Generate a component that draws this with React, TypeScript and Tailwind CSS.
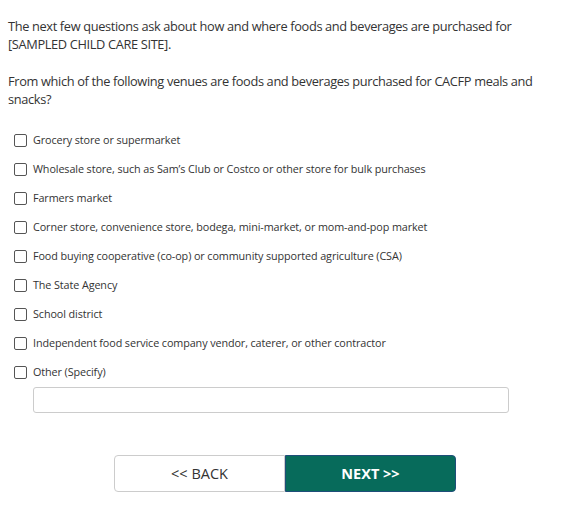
const options = [
  'Grocery store or supermarket',
  'Wholesale store, such as Sam’s Club or Costco or other store for bulk purchases',
  'Farmers market',
  'Corner store, convenience store, bodega, mini-market, or mom-and-pop market',
  'Food buying cooperative (co-op) or community supported agriculture (CSA)',
  'The State Agency',
  'School district',
  'Independent food service company vendor, caterer, or other contractor',
  'Other (Specify)',
];

export default function App() {
  return (
    <div
      className="w-[571px] h-[510px] bg-white text-[#333] pl-2 pt-[17px]"
      style={{ fontFamily: '"Open Sans", "Noto Sans", sans-serif' }}
    >
      <p className="text-[12.8px] leading-[18px] tracking-[-0.35px]">
        The next few questions ask about how and where foods and beverages are purchased for
        <br />
        [SAMPLED CHILD CARE SITE].
      </p>
      <p className="mt-[19px] text-[12.8px] leading-[18px] tracking-[-0.35px]">
        From which of the following venues are foods and beverages purchased for CACFP meals and
        <br />
        snacks?
      </p>

      <div className="mt-[25px] flex flex-col gap-[14px] pl-[6px]">
        {options.map((label) => (
          <label key={label} className="flex items-center h-[15px] gap-[6px] text-[10.8px] tracking-[-0.1px]">
            <span className="w-[13px] h-[13px] border border-[#555] rounded-[2px] bg-white shrink-0" />
            <span>{label}</span>
          </label>
        ))}
      </div>

      <div className="mt-[7px] pl-[25px]">
        <input
          type="text"
          className="w-[476px] h-[26px] border border-[#ccc] rounded-[3px] outline-none"
        />
      </div>

      <div className="mt-[42px] flex pl-[106px]">
        <button className="w-[171px] h-[37px] border border-[#ccc] rounded-l-[4px] bg-white text-[#333] text-[14.5px]">
          &lt;&lt; BACK
        </button>
        <button className="w-[171px] h-[37px] border border-[#1f4e79] rounded-r-[4px] bg-[#076b5b] text-white text-[14.5px] font-bold">
          NEXT &gt;&gt;
        </button>
      </div>
    </div>
  );
}
